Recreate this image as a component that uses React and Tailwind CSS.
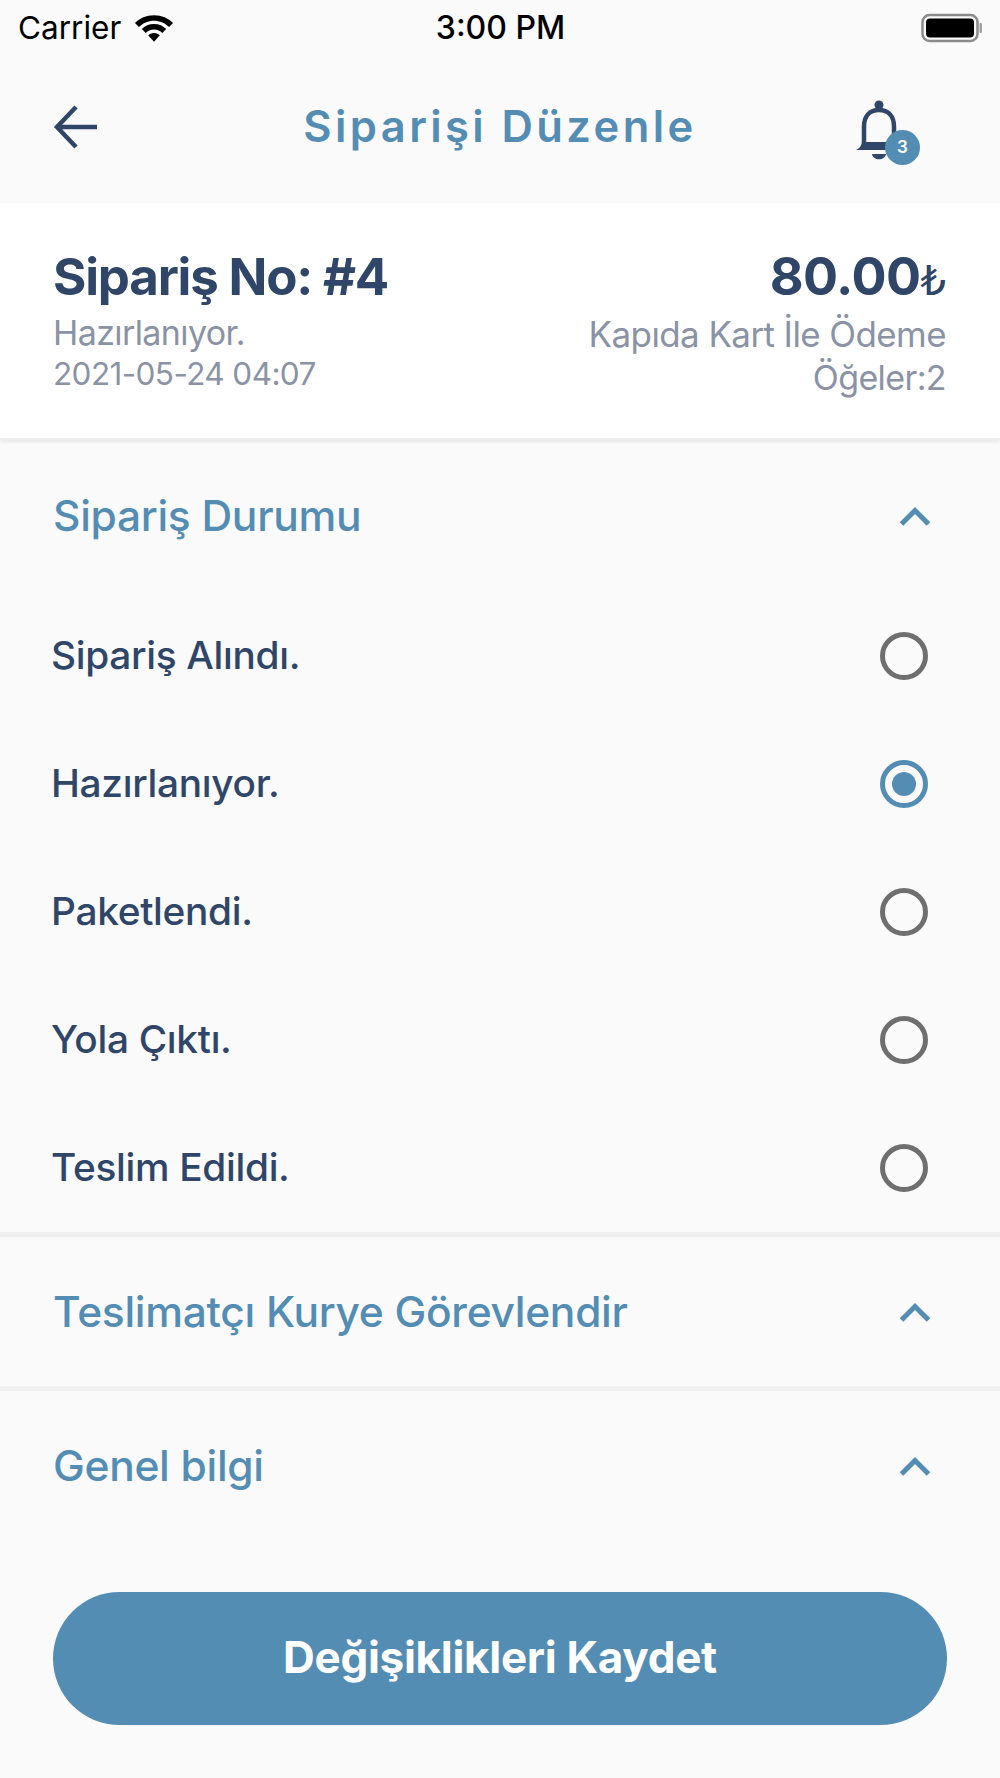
import React from "react";

const F = "font-['Inter','Noto_Sans',sans-serif]";

function Chevron() {
  return (
    <svg width="34" height="22" viewBox="0 0 34 22" fill="none" className="shrink-0">
      <path d="M3.5 19 L17 5.5 L30.5 19" stroke="#548DB4" strokeWidth="5" strokeLinecap="butt" strokeLinejoin="miter" />
    </svg>
  );
}

function Radio({ on }) {
  return (
    <div className={`w-12 h-12 rounded-full border-[5px] flex items-center justify-center shrink-0 ${on ? "border-[#548DB4]" : "border-[#6f6f6f]"}`}>
      {on && <div className="w-6 h-6 rounded-full bg-[#548DB4]" />}
    </div>
  );
}

function SectionHead({ title, h }) {
  return (
    <div className={`flex items-center justify-between pl-[53px] pr-[68px] ${h}`}>
      <span className="text-[42.5px] font-medium tracking-[-0.3px] text-[#548DB4]">{title}</span>
      <Chevron />
    </div>
  );
}

export default function App() {
  const rows = ["Sipariş Alındı.", "Hazırlanıyor.", "Paketlendi.", "Yola Çıktı.", "Teslim Edildi."];
  return (
    <div className={`${F} w-[1000px] h-[1778px] bg-[#fafafa] flex flex-col overflow-hidden`}>
      {/* Status bar */}
      <div className="h-[56px] flex items-center justify-between pl-[18px] pr-[17px] text-black">
        <div className="flex items-center gap-[13px] w-[300px]">
          <span className="text-[31.5px] leading-none">Carrier</span>
          <svg width="40" height="30" viewBox="0 0 41 30">
            <path d="M20.5 2C12.5 2 6 5 1 10l4 4c4-4 9.500-6.500 15.500-6.500S32 10 36 14l4-4C35 5 28.500 2 20.500 2z" fill="#000" />
            <path d="M20.500 11c-5 0-9.500 2-12.500 5l4 4c2-2 5-3.500 8.500-3.500S27 18 29 20l4-4c-3-3-7.500-5-12.500-5z" fill="#000" />
            <path d="M20.500 20c-2.500 0-4.500 1-6 2.500l6 6.500 6-6.500C25 21 23 20 20.500 20z" fill="#000" />
          </svg>
        </div>
        <span className="text-[32px] leading-none font-medium">3:00 PM</span>
        <div className="w-[300px] flex justify-end">
          <svg width="62" height="30" viewBox="0 0 62 30">
            <rect x="1.500" y="2" width="55" height="26" rx="7" fill="none" stroke="#8b8b8b" strokeWidth="2.500" />
            <rect x="5" y="5.500" width="48" height="19" rx="4" fill="#000" />
            <rect x="58.500" y="10" width="2.500" height="10" rx="1.200" fill="#a0a0a0" />
          </svg>
        </div>
      </div>

      {/* Header */}
      <div className="h-[147px] flex items-start justify-between pl-[53px] pr-[53px]">
        <div className="w-[180px]">
          <svg width="46" height="48" viewBox="0 0 46 48" fill="none" className="mt-[47px]">
            <path d="M44 24 H4 M23 4 L4 24 L23 44" stroke="#2F4668" strokeWidth="4.500" />
          </svg>
        </div>
        <span className="mt-[42px] text-[43.5px] leading-[56px] font-semibold tracking-[3.400px] text-[#548DB4] whitespace-nowrap">Siparişi Düzenle</span>
        <div className="w-[180px] flex justify-end pr-[27px]">
          <div className="relative w-[65px] h-[67px] mt-[44px]">
            <svg width="48" height="60" viewBox="0 0 48 60" fill="none" className="absolute left-0 top-0">
              <circle cx="24" cy="5" r="4.500" fill="#2F4668" />
              <path d="M9 43 V27 C9 16 15 10 24 10 C33 10 39 16 39 27 V43" stroke="#2F4668" strokeWidth="4.500" />
              <path d="M1 50 C5 48 6 46 7 42 H41 C42 46 43 48 47 50 Z" fill="#2F4668" />
              <path d="M17 54 C18 61 30 61 31 54 Z" fill="#2F4668" />
            </svg>
            <div className="absolute left-[30px] top-[30px] w-[35px] h-[35px] rounded-full bg-[#548DB4] text-white text-[17px] font-semibold flex items-center justify-center">3</div>
          </div>
        </div>
      </div>

      {/* Order card */}
      <div className="h-[237px] bg-white shadow-[0_2px_4px_rgba(0,0,0,0.08)] border-b-2 border-[#ececee] flex justify-between pl-[53px] pr-[54px] pt-[44px]">
        <div className="flex flex-col">
          <span className="text-[51px] leading-[60px] font-bold tracking-[-1.200px] text-[#2F4668]">Sipariş No: #4</span>
          <span className="text-[34px] leading-[41px] tracking-[-0.600px] text-[#8A93A5] mt-[5px]">Hazırlanıyor.</span>
          <span className="text-[31.5px] leading-[41px] tracking-[-0.600px] text-[#8A93A5]">2021-05-24 04:07</span>
        </div>
        <div className="flex flex-col items-end">
          <span className="text-[52px] leading-[60px] font-bold tracking-[-0.500px] text-[#2F4668] flex items-baseline">80.00<span className="font-['DejaVu_Sans',sans-serif] text-[40px] font-normal tracking-normal">₺</span></span>
          <span className="text-[35px] leading-[43px] tracking-[-0.600px] text-[#8A93A5] mt-[2px]">Kapıda Kart İle Ödeme</span>
          <span className="text-[34px] leading-[43px] tracking-[-0.600px] text-[#8A93A5]">Öğeler:2</span>
        </div>
      </div>

      {/* Status section */}
      <SectionHead title="Sipariş Durumu" h="h-[152px]" />
      <div className="flex flex-col pl-[51px] pr-[72px] h-[640px]">
        {rows.map((r, i) => (
          <div key={r} className="h-[128px] shrink-0 flex items-center justify-between">
            <span className="text-[38.8px] font-medium tracking-[-0.300px] text-[#2F4668] mb-[2px]">{r}</span>
            <Radio on={i === 1} />
          </div>
        ))}
      </div>

      <div className="h-[5px] bg-[#f0f0f0]" />
      <SectionHead title="Teslimatçı Kurye Görevlendir" h="h-[149px]" />
      <div className="h-[5px] bg-[#f0f0f0]" />
      <SectionHead title="Genel bilgi" h="h-[150px]" />

      {/* Button */}
      <div className="px-[53px] mt-[51px]">
        <button className="w-full h-[133px] rounded-[67px] bg-[#548DB4] text-white text-[44px] font-bold tracking-[-0.300px] pb-[4px] flex items-center justify-center">
          Değişiklikleri Kaydet
        </button>
      </div>
    </div>
  );
}
